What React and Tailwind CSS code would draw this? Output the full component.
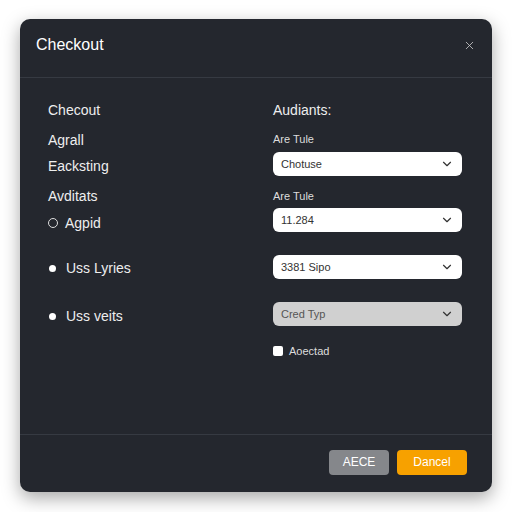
import { ChevronDown, X } from 'lucide-react';

function Select({ value, muted }) {
    return (
        <div
            className={`flex items-center justify-between h-6 rounded-md px-2 text-[11px] ${muted ? 'bg-[#d0d0d0] text-[#555]' : 'bg-white text-[#333]'}`}
        >
            <span>{value}</span>
            <ChevronDown size={14} strokeWidth={2} className="text-[#333]" />
        </div>
    );
}

export default function App() {
    return (
        <div className="w-[512px] h-[512px] bg-white flex items-start justify-center pt-[19px]" style={{ fontFamily: '"Liberation Sans", Arial, sans-serif' }}>
            <div className="w-[472px] h-[473px] bg-[#24272e] rounded-[10px] shadow-[0_6px_18px_rgba(0,0,0,0.35)] flex flex-col text-white">
                <div className="h-[59px] flex items-center justify-between pl-4 pr-4 pb-[6px] border-b border-[#363a42]">
                    <span className="text-[16px]">Checkout</span>
                    <X size={13} strokeWidth={1.5} className="text-[#ccc]" />
                </div>
                <div className="flex-1 flex pl-7 pr-[30px] pt-[22px]">
                    <div className="w-[225px] flex flex-col text-[14px] text-[#eee]">
                        <div className="h-[20px] leading-[20px]">Checout</div>
                        <div className="h-[20px] leading-[20px] mt-[10px]">Agrall</div>
                        <div className="h-[20px] leading-[20px] mt-[6px]">Eacksting</div>
                        <div className="h-[20px] leading-[20px] mt-[10px]">Avditats</div>
                        <div className="h-[20px] leading-[20px] mt-[7px] flex items-center gap-[7px]">
                            <span className="w-[10px] h-[10px] rounded-full border border-[#ddd]" />
                            <span>Agpid</span>
                        </div>
                        <div className="h-[20px] leading-[20px] mt-[25px] flex items-center gap-[10px]">
                            <span className="w-[7px] h-[7px] rounded-full bg-white ml-[1px]" />
                            <span>Uss Lyries</span>
                        </div>
                        <div className="h-[20px] leading-[20px] mt-[28px] flex items-center gap-[10px]">
                            <span className="w-[7px] h-[7px] rounded-full bg-white ml-[1px]" />
                            <span>Uss veits</span>
                        </div>
                    </div>
                    <div className="flex-1 flex flex-col">
                        <div className="h-[20px] leading-[20px] text-[14px] text-[#eee]">Audiants:</div>
                        <div className="text-[11px] text-[#ddd] mt-[12px] h-[14px] leading-[14px]">Are Tule</div>
                        <div className="mt-[6px]"><Select value="Chotuse" /></div>
                        <div className="text-[11px] text-[#ddd] mt-[13px] h-[14px] leading-[14px]">Are Tule</div>
                        <div className="mt-[5px]"><Select value="11.284" /></div>
                        <div className="mt-[23px]"><Select value="3381 Sipo" /></div>
                        <div className="mt-[23px]"><Select value="Cred Typ" muted /></div>
                        <div className="mt-[17px] flex items-center gap-[6px] text-[11px] text-[#ddd]">
                            <span className="w-[10px] h-[10px] bg-white rounded-[2px]" />
                            <span>Aoectad</span>
                        </div>
                    </div>
                </div>
                <div className="h-[58px] border-t border-[#363a42] flex items-center justify-end gap-2 pr-[25px] pb-[3px]">
                    <button className="w-[60px] h-[25px] rounded-[4px] bg-[#85878b] text-white text-[12px]">AECE</button>
                    <button className="w-[70px] h-[25px] rounded-[4px] bg-[#f7a100] text-white text-[12px]">Dancel</button>
                </div>
            </div>
        </div>
    );
}
